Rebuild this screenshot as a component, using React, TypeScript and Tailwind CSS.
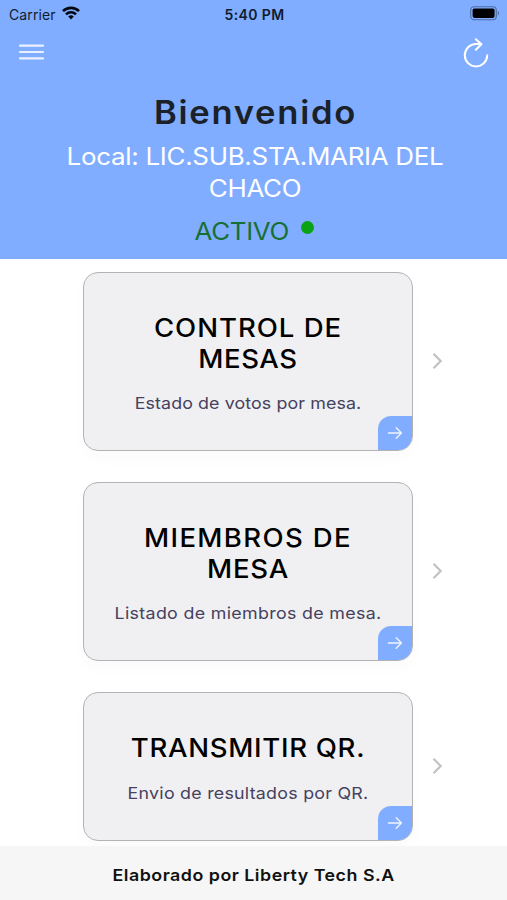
import { type ReactNode } from "react";

type MenuCard = {
  lines: { text: string; className: string }[];
  description: string;
  descriptionClass: string;
};

const CARDS: MenuCard[] = [
  {
    lines: [
      { text: "CONTROL DE", className: "tracking-[0.9px]" },
      { text: "MESAS", className: "tracking-[0.5px]" },
    ],
    description: "Estado de votos por mesa.",
    descriptionClass: "tracking-[0.1px]",
  },
  {
    lines: [
      { text: "MIEMBROS DE", className: "tracking-[1.25px]" },
      { text: "MESA", className: "tracking-[0.7px]" },
    ],
    description: "Listado de miembros de mesa.",
    descriptionClass: "tracking-[0.3px]",
  },
  {
    lines: [{ text: "TRANSMITIR QR.", className: "tracking-[0.65px]" }],
    description: "Envio de resultados por QR.",
    descriptionClass: "tracking-[0.23px]",
  },
];

function Wide({ children, className }: { children: ReactNode; className: string }) {
  return (
    <span className={`block scale-x-[1.08] text-center whitespace-nowrap ${className}`}>
      {children}
    </span>
  );
}

function StatusBar() {
  return (
    <div className="grid h-7 grid-cols-3 items-center pr-[7px] pl-[9px] text-[14px] text-[#101c2e]">
      <div className="flex items-center gap-1.5">
        <span className="tracking-[0.1px]">Carrier</span>
        <svg className="-mt-0.5" width="18" height="14" viewBox="0 0 18 14" fill="none" stroke="#05080d" strokeWidth="2.6">
          <path d="M1 5.2a11.3 11.3 0 0 1 16 0" />
          <path d="M4 8.4a7 7 0 0 1 10 0" />
          <path d="M9 13.4 6.2 10.6a4 4 0 0 1 5.6 0z" fill="#05080d" stroke="none" />
        </svg>
      </div>
      <span className="text-center text-[14px] font-semibold tracking-[0.4px] whitespace-nowrap">5:40 PM</span>
      <svg className="-mt-0.5 justify-self-end" width="30" height="15" viewBox="0 0 30 15" fill="none">
        <rect x="0.7" y="0.7" width="25.6" height="13" rx="3.5" stroke="#4d6da3" strokeWidth="1.1" />
        <rect x="2.6" y="2.5" width="22" height="9.4" rx="1.8" fill="#000" />
        <path d="M27.8 5v4.4c1.6-.6 1.6-3.8 0-4.4z" fill="#4d6da3" />
      </svg>
    </div>
  );
}

function Header() {
  return (
    <header className="h-[259px] bg-[#80adff]">
      <StatusBar />
      <div className="flex h-[50px] items-center justify-between pr-[18px] pl-[18px] text-white">
        <svg className="-mt-0.5" width="27" height="18" viewBox="0 0 27 18" stroke="#e9f1ff" strokeWidth="2.2" strokeLinecap="round">
          <path d="M2 2.7h23M2 9h23M2 15.4h23" />
        </svg>
        <svg width="26" height="31" viewBox="0 0 26 31" fill="none" stroke="#fff" strokeWidth="2" strokeLinecap="round" strokeLinejoin="round">
          <path d="M24.2 17.2A11.2 11.2 0 1 1 13 6h5" />
          <path d="m12.8 1.2 5.6 5-5.6 5.6" />
        </svg>
      </div>
      <h1 className="mt-[16px] pl-[4px] text-[32px] leading-[38px] font-semibold text-[#1b2129]">
        <Wide className="tracking-[1.6px]">Bienvenido</Wide>
      </h1>
      <div className="mt-[9px] pl-[3px] text-[24px] leading-8 text-white">
        <Wide className="tracking-[-0.26px]">Local: LIC.SUB.STA.MARIA DEL</Wide>
        <Wide className="tracking-[-0.3px]">CHACO</Wide>
      </div>
      <div className="mt-[11px] flex h-8 justify-center gap-[16px] pl-[5px] text-[24px] leading-8 text-[#176f32]">
        <Wide className="tracking-[-0.3px]">ACTIVO</Wide>
        <span className="mt-[5px] size-[13px] rounded-full bg-[#0ba313]" />
      </div>
    </header>
  );
}

function Card({ card }: { card: MenuCard }) {
  return (
    <div className="flex items-center pl-[83px]">
      <div className="relative w-[330px] overflow-hidden rounded-[15px] border border-[#b3b3b5] bg-[#f0f0f2] pt-[40px] pb-[35px] shadow-[0_8px_16px_rgba(0,0,0,0.02)]">
        <h2 className="text-[25.5px] leading-[30.5px] font-medium text-black">
          {card.lines.map((line) => (
            <Wide key={line.text} className={line.className}>
              {line.text}
            </Wide>
          ))}
        </h2>
        <p className="mt-[17px] text-[16.5px] leading-6 text-[#45415e]">
          <Wide className={card.descriptionClass}>{card.description}</Wide>
        </p>
        <div className="absolute right-0 bottom-0 flex size-[34px] items-center justify-center rounded-tl-[13px] bg-[#80adff]">
          <svg width="16" height="14" viewBox="0 0 16 14" fill="none" stroke="#eef4ff" strokeWidth="1.4" strokeLinecap="round" strokeLinejoin="round">
            <path d="M1.5 7h13M9.2 1.8 14.4 7l-5.2 5.2" />
          </svg>
        </div>
      </div>
      <svg className="-mt-px ml-[19px]" width="12" height="18" viewBox="0 0 12 18" fill="none" stroke="#c2c2c4" strokeWidth="2.2">
        <path d="m1.5 1.8 7.2 7.2-7.2 7.2" />
      </svg>
    </div>
  );
}

export default function App() {
  return (
    <div className="flex h-[900px] w-[507px] flex-col overflow-hidden bg-white font-['Inter',sans-serif]">
      <Header />
      <main className="flex flex-1 flex-col gap-[31px] overflow-hidden pt-[13px]">
        {CARDS.map((card) => (
          <Card key={card.description} card={card} />
        ))}
      </main>
      <footer className="flex h-[54px] items-center justify-center bg-[#f6f6f6] pt-1 text-[16.5px] leading-6 font-semibold text-[#111]">
        <Wide className="tracking-[0.46px]">Elaborado por Liberty Tech S.A</Wide>
      </footer>
    </div>
  );
}
